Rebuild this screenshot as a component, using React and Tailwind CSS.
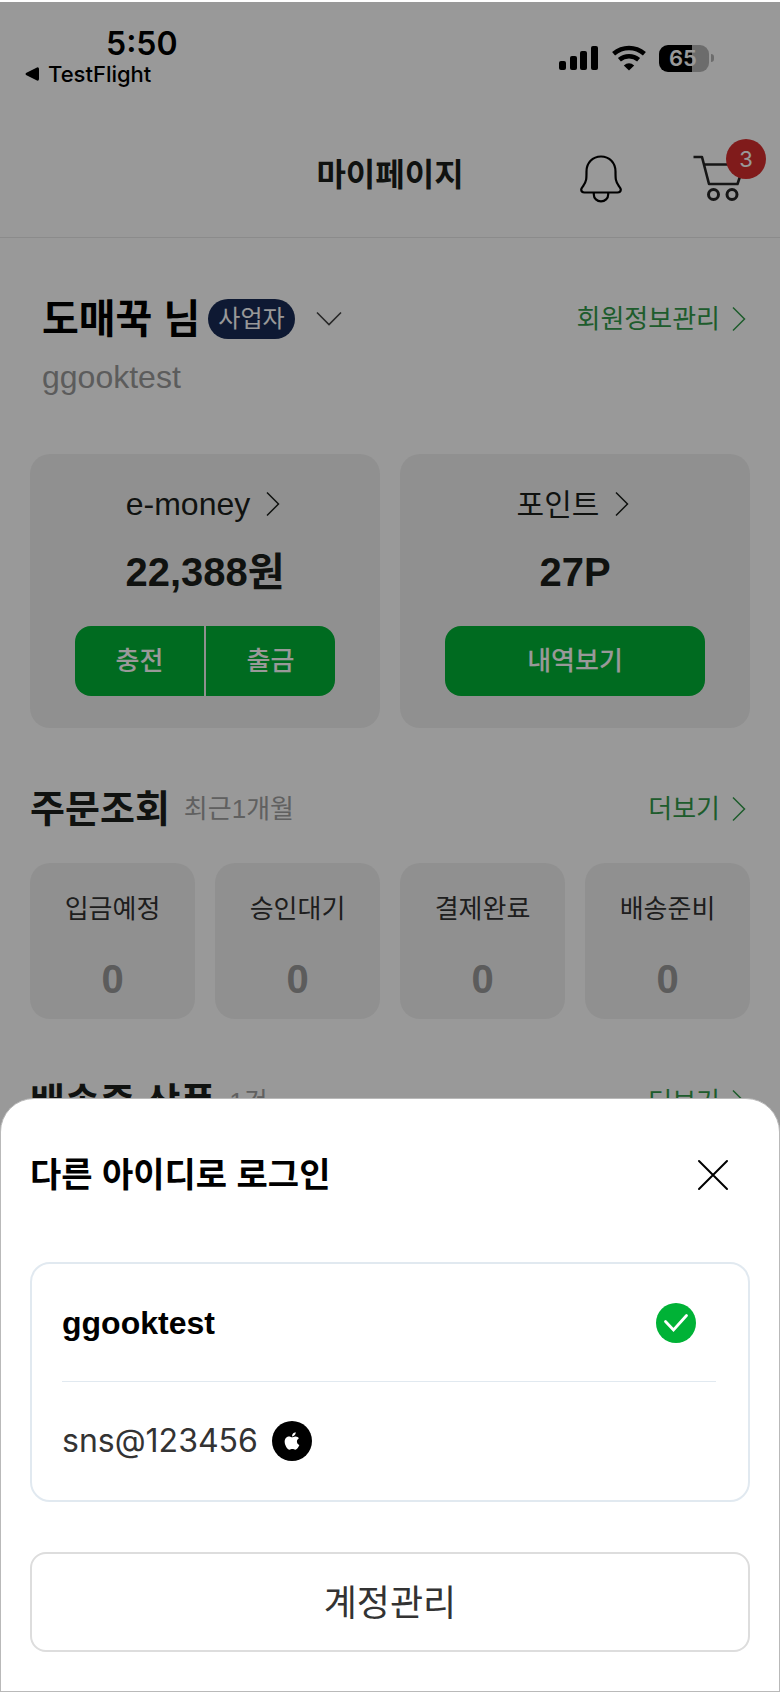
import { FaApple } from 'react-icons/fa';

const HANGUL = "font-['Liberation_Sans','Noto_Sans_CJK_KR',sans-serif]";

const orderStates = [
  { label: '입금예정', count: 0 },
  { label: '승인대기', count: 0 },
  { label: '결제완료', count: 0 },
  { label: '배송준비', count: 0 },
];

function ChevronRight() {
  return (
    <svg width="14" height="26" viewBox="0 0 14 26" fill="none" stroke="currentColor" strokeWidth="1.5" aria-hidden="true">
      <path d="M1 1.5L12.5 13L1 24.5" />
    </svg>
  );
}

function StatusBar() {
  return (
    <div className="flex h-[110px] items-start justify-between pr-[66px] pl-6 font-['Inter',sans-serif] text-black">
      <div className="pt-6">
        <div className="pl-[82px] text-[32px] leading-9 font-semibold">5:50</div>
        <a href="#testflight" className="flex items-center gap-2 text-[22px] leading-6 font-medium">
          <svg width="16" height="16" viewBox="0 0 16 16" aria-hidden="true">
            <path d="M2 7Q1 8 2 9L13 14.6Q15 15 15 13V3Q15 1 13 1.4Z" fill="currentColor" />
          </svg>
          TestFlight
        </a>
      </div>
      <div className="mt-[42px] flex h-7 items-center gap-3">
        <svg width="40" height="26" viewBox="0 0 40 26" aria-hidden="true">
          <rect x="0" y="16" width="7" height="9" rx="2" />
          <rect x="11" y="11" width="7" height="14" rx="2" />
          <rect x="21" y="6" width="7" height="19" rx="2" />
          <rect x="32" y="1" width="7" height="24" rx="2" />
        </svg>
        <svg width="36" height="26" viewBox="0 0 36 26" fill="none" stroke="currentColor" strokeWidth="4.6" aria-hidden="true">
          <path d="M2.6 8.8Q9.5 3 18 3T33.4 8.8" />
          <path d="M8.4 14.7Q12.6 11.2 18 11.2T27.6 14.7" />
          <path d="M12.8 20.4Q18 16 23.2 20.4L18 25.4Z" fill="currentColor" stroke="none" />
        </svg>
        <div className="flex items-center gap-0.5">
          <div className="flex h-[27px] w-[50px] items-center justify-center rounded-[9px] bg-linear-to-r from-black from-66% to-[#b5b5b5] to-66% pr-0.5 text-[22px] leading-none font-semibold text-white">
            65
          </div>
          <div className="h-2 w-[3px] rounded-r-full bg-[#b5b5b5]" />
        </div>
      </div>
    </div>
  );
}

function Header() {
  return (
    <header className="grid h-[126px] grid-cols-[1fr_auto_1fr] items-center border-b border-[#e8e8e8]">
      <h1 className="col-start-2 text-[32px] leading-10 font-bold text-[#1c1f1c]">마이페이지</h1>
      <div className="flex items-center justify-end gap-[70px] pr-[33px]">
        <button type="button" aria-label="알림" className="pt-2">
          <svg width="44" height="48" viewBox="0 0 44 48" fill="none" stroke="#000" strokeWidth="2.2" aria-hidden="true">
            <path d="M22 1.5C13.500 1.500 7.500 8 7.500 16.500C7.500 24 7.500 26 4.500 30.500C3 32.500 2.200 33.500 2.200 34.500C2.200 36.500 3.500 37.500 5.500 37.500H38.500C40.500 37.500 41.800 36.500 41.800 34.500C41.800 33.500 41 32.500 39.500 30.500C36.500 26 36.500 24 36.500 16.500C36.500 8 30.500 1.500 22 1.500Z" />
            <path d="M14.800 37.500V39.500C14.800 43.500 18 46.300 22 46.300C26 46.300 29.200 43.500 29.200 39.500V37.500" />
          </svg>
        </button>
        <button type="button" aria-label="장바구니" className="relative pt-2">
          <svg width="54" height="48" viewBox="0 0 54 48" fill="none" stroke="#262626" strokeWidth="2.6" aria-hidden="true">
            <path d="M0.500 2H9L16 29H44.500L51 9.500H11" strokeLinejoin="round" />
            <circle cx="20.500" cy="39.500" r="5" strokeWidth="3" />
            <circle cx="39" cy="39.500" r="5" strokeWidth="3" />
          </svg>
          <span className="absolute -top-2 left-[33px] flex size-10 items-center justify-center rounded-full bg-[#d62e2e] font-['Inter',sans-serif] text-[22px] leading-none text-white">
            3
          </span>
        </button>
      </div>
    </header>
  );
}

function Profile() {
  return (
    <section className="px-[42px] pt-[57px]">
      <div className="flex h-12 items-center justify-between">
        <div className="flex items-center">
          <h2 className="text-[40px] leading-[48px] font-bold text-black">도매꾹 님</h2>
          <span className="ml-2 flex h-10 items-center rounded-full bg-[#182b55] px-2.5 text-[24px] leading-none text-white">사업자</span>
          <button type="button" aria-label="계정 전환" className="ml-5 text-[#444]">
            <svg width="28" height="16" viewBox="0 0 28 16" fill="none" stroke="currentColor" strokeWidth="1.6" aria-hidden="true">
              <path d="M2 1.500L14 13.500L26 1.500" />
            </svg>
          </button>
        </div>
        <a href="#member" className="-mr-2 flex items-center gap-3 text-[26px] leading-8 text-[#339a4a]">
          회원정보관리
          <ChevronRight />
        </a>
      </div>
      <p className="mt-3.5 text-[32px] leading-10 text-[#999]">ggooktest</p>
    </section>
  );
}

function BalanceCard({ title, titleClass, amount, children }) {
  return (
    <div className="flex h-[274px] flex-col items-center rounded-[20px] bg-[#f1f1f1] px-[45px] pt-7">
      <a href="#balance" className={`flex h-11 items-center gap-4 pr-1 text-[#1c1f1c] ${titleClass}`}>
        {title}
        <ChevronRight />
      </a>
      <p className="mt-5 text-[40px] leading-[52px] font-bold text-[#1c1f1c]">{amount}</p>
      <div className="mt-7 flex h-[70px] w-full gap-0.5 overflow-hidden rounded-2xl text-[26px] font-medium text-white">
        {children}
      </div>
    </div>
  );
}

function Balances() {
  return (
    <section className="mt-[57px] grid grid-cols-2 gap-5 px-[30px]">
      <BalanceCard title="e-money" titleClass="text-[32px]" amount="22,388원">
        <button type="button" className="flex-1 bg-[#00b236]">충전</button>
        <button type="button" className="flex-1 bg-[#00b236]">출금</button>
      </BalanceCard>
      <BalanceCard title="포인트" titleClass="text-[30px]" amount="27P">
        <button type="button" className="flex-1 bg-[#00b236]">내역보기</button>
      </BalanceCard>
    </section>
  );
}

function SectionTitle({ title, note }) {
  return (
    <div className="flex h-14 items-center justify-between pr-1">
      <div className="flex items-center gap-3.5">
        <h2 className="text-[38px] leading-[48px] font-bold text-[#1c1f1c]">{title}</h2>
        <span className="text-[26px] leading-8 text-[#a0a0a0]">{note}</span>
      </div>
      <a href="#more" className="flex items-center gap-3 text-[26px] leading-8 text-[#339a4a]">
        더보기
        <ChevronRight />
      </a>
    </div>
  );
}

function AccountSheet() {
  return (
    <div role="dialog" aria-labelledby="sheet-title" className="w-full rounded-t-[34px] border border-[#b9b9b9] bg-white px-[29px] pb-[39px]">
      <div className="flex h-[163px] items-center justify-between pr-5 pb-3">
        <h2 id="sheet-title" className="text-[34px] leading-10 font-bold text-black">다른 아이디로 로그인</h2>
        <button type="button" aria-label="닫기">
          <svg width="34" height="34" viewBox="0 0 34 34" stroke="#000" strokeWidth="2" strokeLinecap="round" aria-hidden="true">
            <path d="M3 3L31 31M31 3L3 31" />
          </svg>
        </button>
      </div>
      <ul className="rounded-[20px] border-2 border-[#e1e9f0] pr-8 pl-[30px]">
        <li className="border-b border-[#e1e9f0]">
          <button type="button" aria-pressed="true" className="flex h-[117px] w-full items-center justify-between pr-5 text-[32px] font-bold text-black">
            ggooktest
            <svg width="40" height="40" viewBox="0 0 40 40" fill="none" aria-hidden="true">
              <circle cx="20" cy="20" r="20" fill="#00b236" />
              <path d="M9.500 18.500L17.500 27L30.500 12.500" stroke="#fff" strokeWidth="2.8" strokeLinecap="round" />
            </svg>
          </button>
        </li>
        <li>
          <button type="button" aria-pressed="false" className="flex h-[118px] w-full items-center gap-3.5 font-['Inter',sans-serif] text-[32px] text-[#333]">
            sns@123456
            <span className="flex size-10 items-center justify-center rounded-full bg-black text-white">
              <FaApple className="size-5" />
            </span>
          </button>
        </li>
      </ul>
      <button type="button" className="mt-[50px] h-[100px] w-full rounded-2xl border-2 border-[#ddd] pt-1 text-[36px] text-[#333]">
        계정관리
      </button>
    </div>
  );
}

export default function App() {
  return (
    <div className={`relative min-h-screen bg-white pt-0.5 ${HANGUL}`}>
      <StatusBar />
      <Header />
      <main>
        <Profile />
        <Balances />
        <section className="mt-[53px] px-[30px]">
          <SectionTitle title="주문조회" note="최근1개월" />
          <ul className="mt-[26px] grid grid-cols-4 gap-5">
            {orderStates.map(({ label, count }) => (
              <li key={label} className="flex h-[156px] flex-col items-center rounded-[20px] bg-[#f1f1f1] pt-7">
                <span className="text-[26px] leading-9 text-[#333]">{label}</span>
                <span className="mt-7 text-[40px] leading-[48px] font-bold text-[#999]">{count}</span>
              </li>
            ))}
          </ul>
        </section>
        <section className="mt-[55px] px-[30px]">
          <SectionTitle title="배송중 상품" note="1건" />
        </section>
      </main>
      <div className="fixed inset-x-0 top-0.5 bottom-0 flex items-end bg-black/40">
        <AccountSheet />
      </div>
    </div>
  );
}
